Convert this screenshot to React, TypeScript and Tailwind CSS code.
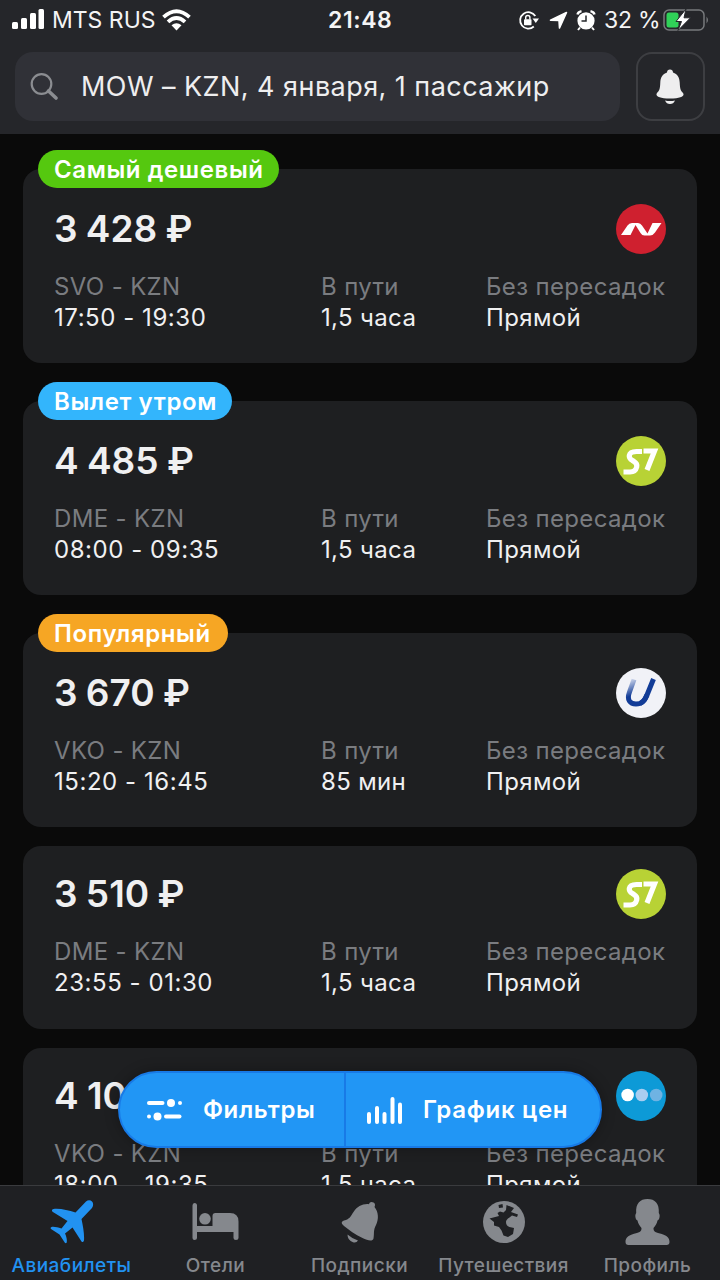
import React from "react";

type Flight = {
  price: string;
  route: string;
  time: string;
  duration: string;
  airline: "nordwind" | "s7" | "utair" | "pobeda";
  badge?: { text: string; className: string };
};

const flights: Flight[] = [
  {
    price: "3 428 ₽",
    route: "SVO - KZN",
    time: "17:50 - 19:30",
    duration: "1,5 часа",
    airline: "nordwind",
    badge: { text: "Самый дешевый", className: "bg-[#55c80f] w-[241px]" },
  },
  {
    price: "4 485 ₽",
    route: "DME - KZN",
    time: "08:00 - 09:35",
    duration: "1,5 часа",
    airline: "s7",
    badge: { text: "Вылет утром", className: "bg-[#33b5fc] w-[194px]" },
  },
  {
    price: "3 670 ₽",
    route: "VKO - KZN",
    time: "15:20 - 16:45",
    duration: "85 мин",
    airline: "utair",
    badge: { text: "Популярный", className: "bg-[#f6a624] w-[190px]" },
  },
  {
    price: "3 510 ₽",
    route: "DME - KZN",
    time: "23:55 - 01:30",
    duration: "1,5 часа",
    airline: "s7",
  },
  {
    price: "4 103 ₽",
    route: "VKO - KZN",
    time: "18:00 - 19:35",
    duration: "1,5 часа",
    airline: "pobeda",
  },
];

const AirlineLogo = ({ airline }: { airline: Flight["airline"] }) => {
  if (airline === "nordwind") {
    return (
      <svg className="size-[50px]" viewBox="0 0 50 50">
        <circle cx="25" cy="25" r="25" fill="#cf202f" />
        <path
          d="M5 31 L11.5 21.5 Q13 19 16 19 H22 Q24.5 19 26 21.5 L31.500 29.500 L36.500 19 H45.500 L39 28.500 Q37 31.500 34 31.500 H28.500 Q26 31.500 24.500 29 L19.500 21 L14.500 31 Z"
          fill="#fff"
        />
      </svg>
    );
  }
  if (airline === "s7") {
    return (
      <svg className="size-[50px]" viewBox="0 0 50 50">
        <circle cx="25" cy="25" r="25" fill="#b8d235" />
        <g fill="none" stroke="#fff" strokeWidth="5.200">
          <path d="M26 15.500 H20.500 Q14 15.500 13.300 19.500 Q12.800 22.500 16.500 24.500 L18 25.500 Q21.500 27.500 20.700 31 Q19.500 36 14 36 H7.500" />
          <path d="M27.500 15 H38.500 L31 34" />
        </g>
      </svg>
    );
  }
  if (airline === "utair") {
    return (
      <svg className="size-[50px]" viewBox="0 0 50 50">
        <defs>
          <linearGradient id="utair" x1="0" y1="0" x2="0.3" y2="1">
            <stop offset="0" stopColor="#d3dbee" />
            <stop offset="0.65" stopColor="#123c97" />
          </linearGradient>
        </defs>
        <circle cx="25" cy="25" r="25" fill="#f1f2f7" />
        <path
          d="M18 11.500 L13.500 24 C10.500 32 14 36 20 36 C26 36 28.500 33 31 27"
          fill="none"
          stroke="url(#utair)"
          strokeWidth="5"
        />
        <path d="M37.500 11 L31 27 Q28.500 33.500 24 35.500" fill="none" stroke="#123c97" strokeWidth="5" />
      </svg>
    );
  }
  return (
    <svg className="size-[50px]" viewBox="0 0 50 50">
      <circle cx="25" cy="25" r="25" fill="#0d9ad7" />
      <circle cx="11.600" cy="24" r="6.300" fill="#fff" />
      <circle cx="25.800" cy="24" r="6.300" fill="#a9cdf0" />
      <circle cx="40.200" cy="24" r="6.300" fill="#6fb3e3" />
    </svg>
  );
};

const StatusBar = () => (
  <div className="flex h-10 items-center text-[23px] text-[#f4f4f5]">
    <svg className="ml-3 h-[22px] w-8 shrink-0" viewBox="0 0 32 22" fill="#fff">
      <rect x="0" y="13" width="6" height="7" rx="1.500" />
      <rect x="9" y="9" width="6" height="11" rx="1.500" />
      <rect x="18" y="4" width="6" height="16" rx="1.500" />
      <rect x="26.500" y="0" width="5.500" height="20" rx="1.500" />
    </svg>
    <span className="ml-2 w-[102px] whitespace-nowrap">MTS RUS</span>
    <svg className="ml-[8px] h-[22px] w-[29px] shrink-0" viewBox="0 0 29 22">
      <g fill="none" stroke="#fff" strokeWidth="3.800">
        <path d="M1.500 8.200 Q14.500 -3.800 27.500 8.200" />
        <path d="M6 12.800 Q14.500 5 23 12.800" />
      </g>
      <path d="M9.500 16.300 Q14.500 12.300 19.500 16.300 L14.500 21.500 Z" fill="#fff" />
    </svg>
    <span className="ml-[137px] w-[64px] font-semibold tracking-[0.6px] whitespace-nowrap">21:48</span>
    <svg className="ml-[126px] size-[21px] shrink-0" viewBox="0 0 21 21">
      <path d="M17.300 6 A8.200 8.200 0 1 0 15.800 16.500" fill="none" stroke="#fff" strokeWidth="1.800" />
      <path d="M14.500 8.500 H21 L17.800 13 Z" fill="#fff" />
      <rect x="6" y="9.300" width="7.500" height="6" rx="0.800" fill="#fff" />
      <path
        d="M7.700 9.500 V7.500 Q7.700 5.500 9.800 5.500 Q11.900 5.500 11.900 7.500 V9.500"
        fill="none"
        stroke="#fff"
        strokeWidth="1.400"
      />
    </svg>
    <svg className="ml-[10px] size-[19px] shrink-0" viewBox="0 0 19 19">
      <path
        d="M17.500 1.500 L10.500 17 L10 9.500 L1.500 9.300 Z"
        fill="#fff"
        stroke="#fff"
        strokeWidth="1.600"
        strokeLinejoin="round"
      />
    </svg>
    <svg className="ml-[8px] h-[21px] w-5 shrink-0" viewBox="0 0 20 21">
      <circle cx="10" cy="10.800" r="8.600" fill="#fff" />
      <path
        d="M1.500 4.500 Q2 2 5.500 1.200 M18.500 4.500 Q18 2 14.500 1.200"
        fill="none"
        stroke="#fff"
        strokeWidth="2.400"
      />
      <path d="M4 17.500 L2 20 M16 17.500 L18 20" stroke="#fff" strokeWidth="2" />
      <path d="M10 5.500 V11 H5.500" fill="none" stroke="#25272b" strokeWidth="1.500" />
    </svg>
    <span className="ml-[8px] w-[54px] tracking-[-0.2px] whitespace-nowrap">32 %</span>
    <svg className="ml-[5px] h-[22px] w-[46px] shrink-0" viewBox="0 0 46 22">
      <rect x="1" y="1" width="40" height="20" rx="5" fill="none" stroke="#77797c" strokeWidth="1.500" />
      <path d="M43.500 7.500 Q46.500 11 43.500 14.500 Z" fill="#77797c" />
      <rect x="3.500" y="3.500" width="12" height="15" rx="2.500" fill="#30d158" />
      <path
        d="M23 0 L13 12.500 H18.500 L15 21.500 L27.500 8.800 H21 Z"
        fill="#fff"
        stroke="#25272b"
        strokeWidth="1"
      />
    </svg>
  </div>
);

const Header = () => (
  <header className="h-[134px] shrink-0 bg-[#25262a]">
    <StatusBar />
    <div className="flex justify-between px-[15px] pt-3">
      <div className="flex h-[69px] w-[605px] items-center rounded-[18px] bg-[#303137]">
        <svg className="ml-[15px] size-7" viewBox="0 0 28 28" fill="none" stroke="#8b8d91">
          <circle cx="11.500" cy="11" r="9.800" strokeWidth="2.200" />
          <path d="M18.500 18 L26 25" strokeWidth="3.600" strokeLinecap="round" />
        </svg>
        <span className="mt-0.5 ml-[23px] text-[27px] tracking-[0.45px] whitespace-nowrap text-[#eeeeef]">
          MOW – KZN, 4 января, 1 пассажир
        </span>
      </div>
      <div className="flex h-[69px] w-[69px] items-center justify-center rounded-[16px] border-2 border-[#3d3e42]">
        <svg className="mr-0.5 h-9 w-7" viewBox="0 0 28 36" fill="#eeeeef">
          <path d="M14 0.500 C15.800 0.500 17 1.500 17 3.500 C21.500 5 23.500 8.500 23.700 13.500 C24 20 24.500 21.500 27 24 C29 27 25.500 29.500 14 29.500 C2.500 29.500 -1 27 1 24 C3.500 21.500 4 20 4.300 13.500 C4.500 8.500 6.500 5 11 3.500 C11 1.500 12.200 0.500 14 0.500 Z" />
          <path d="M9 31.500 Q14 32.500 19 31.500 Q17.500 35 14 35 Q10.500 35 9 31.500 Z" />
        </svg>
      </div>
    </div>
  </header>
);

const FlightCard = ({ flight }: { flight: Flight }) => (
  <div className="flex shrink-0 flex-col">
    {flight.badge && (
      <div
        className={`z-10 -mb-[19px] ml-[15px] flex h-[38px] items-center rounded-full pt-px pl-4 text-[24px] font-semibold tracking-[0.6px] whitespace-nowrap text-white ${flight.badge.className}`}
      >
        {flight.badge.text}
      </div>
    )}
    <div
      className={`rounded-[18px] bg-[#1e1f21] px-[31px] ${
        flight.badge ? "h-[194px] pt-[35px]" : "h-[183px] pt-[23px]"
      }`}
    >
      <div className="flex h-[50px] items-center justify-between">
        <span className="text-[37px] font-semibold [word-spacing:-1px] whitespace-nowrap text-[#f0f0f1]">
          {flight.price}
        </span>
        <AirlineLogo airline={flight.airline} />
      </div>
      <div className="mt-[17px] grid grid-cols-[267px_165px_180px] text-[24px] leading-[31px] tracking-[0.35px] whitespace-nowrap">
        <span className="text-[#7a7c80]">{flight.route}</span>
        <span className="text-[#7a7c80]">В пути</span>
        <span className="text-[#7a7c80]">Без пересадок</span>
        <span className="tracking-[0.55px] text-[#f0f0f1]">{flight.time}</span>
        <span className="text-[#f0f0f1]">{flight.duration}</span>
        <span className="text-[#f0f0f1]">Прямой</span>
      </div>
    </div>
  </div>
);

const FloatingActions = () => (
  <div className="absolute bottom-[37px] left-[118px] flex h-[77px] w-[484px] rounded-full border-2 border-[#187ae6] bg-[#2196f5] text-[24px] font-semibold whitespace-nowrap text-white shadow-[0_0_14px_rgba(0,0,0,0.3)]">
    <div className="flex w-[226px] items-center border-r-2 border-[#187ae6] pl-[27px]">
      <svg className="h-[22px] w-[35px]" viewBox="0 0 35 22" fill="#fff">
        <rect x="0" y="2" width="17.500" height="4" rx="2" />
        <circle cx="24" cy="4" r="4" />
        <circle cx="33" cy="4" r="2" />
        <circle cx="2" cy="17.500" r="2" />
        <circle cx="10.500" cy="17.500" r="4" />
        <rect x="17" y="15.500" width="17.500" height="4" rx="2" />
      </svg>
      <span className="ml-[21px] tracking-[0.6px]">Фильтры</span>
    </div>
    <div className="flex items-center pl-[21px]">
      <svg className="h-7 w-9" viewBox="0 0 36 28" fill="#fff">
        <rect x="0" y="16" width="4" height="12" rx="2" />
        <rect x="8" y="10" width="4" height="18" rx="2" />
        <rect x="15.500" y="16" width="4" height="12" rx="2" />
        <rect x="23.500" y="1" width="4" height="27" rx="2" />
        <rect x="31" y="6.500" width="4" height="21.500" rx="2" />
      </svg>
      <span className="ml-[20px] tracking-[0.7px]">График цен</span>
    </div>
  </div>
);

const PlaneIcon = () => (
  <svg className="size-11" viewBox="0 0 44 44" fill="currentColor">
    <path d="M36 1.500 C38 -0.200 40.500 0 42 1.500 C43.500 3 43.500 6 42 8 L31.500 19 C33 26 34.500 34 34 40.500 Q33 43 31.500 41.500 L22.500 27.500 L15 33.500 C16.500 36.500 17.200 40 16.700 42.500 Q16 44 14.700 42.500 L9.500 34.500 L1 29 Q0 27.500 1.500 27 C4.500 26.500 7.500 27.500 11.500 28.500 L17.500 21 L2.500 11.800 Q1 9.500 3.500 9 C11 8.300 18 10.500 25.500 12.500 Z" />
  </svg>
);

const BedIcon = () => (
  <svg className="h-10 w-12" viewBox="0 0 48 40" fill="currentColor">
    <path d="M2.500 1 Q5 1 5 3.500 V24 H20.500 V14 Q20.500 11 23.500 11 H38 Q46.500 11 46.500 19.500 V36 Q46.500 38 44 38 Q41.500 38 41.500 36 V30 H5 V36 Q5 38 2.500 38 Q0.500 38 0.500 36 V3.500 Q0.500 1 2.500 1 Z" />
    <circle cx="13" cy="16.800" r="5.800" />
  </svg>
);

const BellIcon = () => (
  <svg className="size-11" viewBox="0 0 44 44" fill="currentColor">
    <path d="M31 4.200 C31.500 2 33.500 1.500 35.500 2.500 C37.200 3.500 37.500 5 36.500 7 C40.500 12 41 19 38 25 C35 31 36.500 33 35.500 38.500 C34.500 42 29.500 40.500 24.500 38 C17 34.500 11 30 6 26 C3 23.500 3 21.500 6 20.500 C12 19 12.500 16.500 15.500 12 C19 6.500 25 3.500 31 4.200 Z" />
    <path d="M9.500 34.500 Q14 38.500 20 40.500 Q18.500 43 15 42.200 Q9.500 40.500 9.500 34.500 Z" />
  </svg>
);

const GlobeIcon = () => (
  <svg className="size-11" viewBox="0 0 44 44">
    <circle cx="22" cy="22" r="21" fill="currentColor" />
    <path
      d="M7.500 18.500 L17 16 L15.500 13 L18 11.500 L21.500 12.500 L24 10 L24.500 5 L32 8 L29 12 L36 14.500 L35 17 L30 15.500 L27.500 17.500 Q24 19.500 24 22 Q24 26 27.500 27 L32 28 L31 34 L26 37 L21.500 35.500 L19.500 30.500 L17 27 L12 25.500 L12 22 Z M16.500 5 L20.500 4 L21 7.500 L17 8 Z"
      fill="#1f2023"
    />
  </svg>
);

const ProfileIcon = () => (
  <svg className="mr-0.5 h-[46px] w-[45px]" viewBox="0 0 45 46" fill="currentColor">
    <path d="M22.500 0 C30 0 34.500 4.500 33.800 14 C35.500 16 34.500 21 32.500 21.500 C32 25 30 27 28.500 29 C28.500 32.500 30 33.500 36 34.800 C42 36.500 44.500 39 44.500 43 Q44.500 46 41.500 46 H3.500 Q0.500 46 0.500 43 C0.500 39 3 36.500 9 34.800 C15 33.500 16.500 32.500 16.500 29 C15 27 13 25 12.500 21.500 C10.500 21 9.500 16 11.200 14 C10.500 4.500 15 0 22.500 0 Z" />
  </svg>
);

const tabs = [
  { label: "Авиабилеты", icon: <PlaneIcon />, className: "text-[#2292f1]" },
  { label: "Отели", icon: <BedIcon />, className: "text-[#85888d]" },
  { label: "Подписки", icon: <BellIcon />, className: "text-[#85888d]" },
  { label: "Путешествия", icon: <GlobeIcon />, className: "text-[#85888d]" },
  { label: "Профиль", icon: <ProfileIcon />, className: "text-[#85888d]" },
];

const TabBar = () => (
  <nav className="grid h-[95px] shrink-0 grid-cols-5 border-t border-[#3a3b3e] bg-[#1f2023]">
    {tabs.map((tab) => (
      <div key={tab.label} className={`flex flex-col items-center ${tab.className}`}>
        <div className="mt-[12px] flex h-[48px] items-center">{tab.icon}</div>
        <span className="mt-[8px] mr-px text-[19px] leading-6 font-medium tracking-[0.45px] whitespace-nowrap">
          {tab.label}
        </span>
      </div>
    ))}
  </nav>
);

const App = () => {
  return (
    <div className="flex h-[1280px] w-[720px] flex-col overflow-hidden bg-[#0a0a0a] font-['Inter','Liberation_Sans',sans-serif]">
      <Header />
      <main className="relative min-h-0 flex-1 overflow-hidden">
        <div className="flex flex-col gap-[19px] px-[23px] pt-4">
          {flights.map((flight) => (
            <FlightCard key={flight.price} flight={flight} />
          ))}
        </div>
        <FloatingActions />
      </main>
      <TabBar />
    </div>
  );
};

export default App;
